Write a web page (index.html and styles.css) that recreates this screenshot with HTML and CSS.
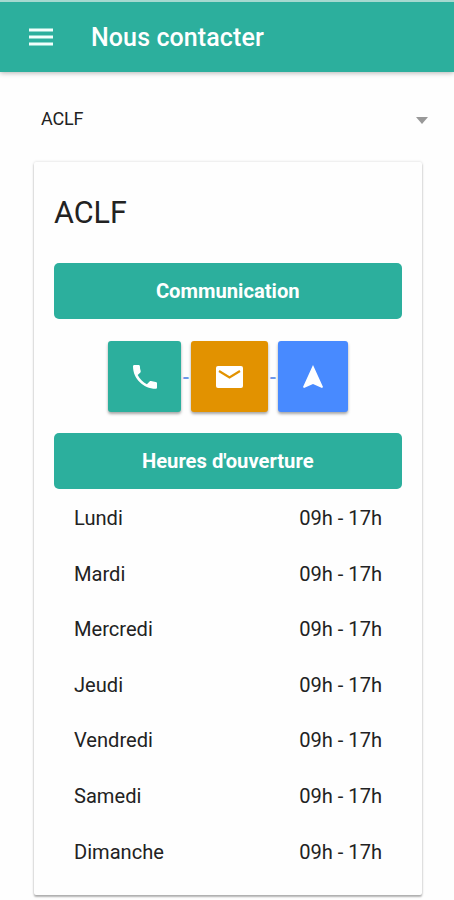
FILE: index.html
```html
<!DOCTYPE html>
<html lang="fr">
<head>
<meta charset="utf-8">
<title>Nous contacter</title>
<link rel="stylesheet" href="styles.css">
</head>
<body>
<header class="toolbar">
  <svg class="menu" viewBox="0 0 24 18" aria-hidden="true"><path d="M0 2h24M0 9h24M0 16h24"/></svg>
  <h1 class="toolbar-title">Nous contacter</h1>
</header>
<main>
  <div class="select"><span>ACLF</span><svg class="caret" viewBox="0 0 12 7" aria-hidden="true"><path d="M0 0h12L6 7z"/></svg></div>
  <section class="card">
    <h2 class="card-title">ACLF</h2>
    <div class="banner">Communication</div>
    <div class="actions">
      <a class="action call"><svg viewBox="0 0 24 24" aria-hidden="true"><path d="M1.4 0h4.2c.7 0 1.3.6 1.3 1.3 0 1.7.3 3.3.8 4.8.1.5 0 1-.3 1.3L4.7 10.1c1.9 3.9 5.2 7.1 9.2 9.1l2.7-2.8c.4-.4.9-.5 1.4-.3 1.500.5 3.1.8 4.7.8.7 0 1.3.6 1.3 1.3v4.3c0 .7-.6 1.300-1.300 1.300C10.2 23.8 0 13.6 0 1.3 0 .6.6 0 1.4 0z"/></svg></a>
      <span class="dash">-</span>
      <a class="action mail"><svg viewBox="0 0 27 22" aria-hidden="true"><rect width="27" height="22" rx="2"/><path class="flap" d="M3 5l10.500 6.500L24 5"/></svg></a>
      <span class="dash">-</span>
      <a class="action nav"><svg viewBox="0 0 20 23" aria-hidden="true"><path d="M10 0L20 22l-1 1-9-4-9 4-1-1z"/></svg></a>
    </div>
    <div class="banner">Heures d'ouverture</div>
    <ul class="hours">
      <li><span>Lundi</span><span>09h - 17h</span></li>
      <li><span>Mardi</span><span>09h - 17h</span></li>
      <li><span>Mercredi</span><span>09h - 17h</span></li>
      <li><span>Jeudi</span><span>09h - 17h</span></li>
      <li><span>Vendredi</span><span>09h - 17h</span></li>
      <li><span>Samedi</span><span>09h - 17h</span></li>
      <li><span>Dimanche</span><span>09h - 17h</span></li>
    </ul>
  </section>
</main>
</body>
</html>
```
FILE: styles.css
```css
* { box-sizing: border-box; }
body {
  margin: 0;
  height: 900px;
  overflow: hidden;
  background: #fefefe;
  color: #222;
  font-family: Roboto, sans-serif;
}
.toolbar {
  display: flex;
  align-items: center;
  height: 72px;
  padding-left: 29px;
  border-top: 2px solid #a5d9d0;
  background: #2caf9d;
  box-shadow: 0 1px 5px rgba(0, 0, 0, .3);
}
.menu {
  width: 24px;
  height: 18px;
  fill: none;
  stroke: #f2fffc;
  stroke-width: 3;
}
.toolbar-title {
  margin: 0 0 0 38px;
  color: #fff;
  font-size: 25px;
  font-weight: 500;
  letter-spacing: .1px;
}
.select {
  display: flex;
  align-items: center;
  justify-content: space-between;
  height: 90px;
  padding: 2px 26px 0 41px;
  font-size: 18px;
  letter-spacing: -.2px;
}
.caret {
  width: 12px;
  height: 7px;
  margin-top: 4px;
  fill: #999;
}
.card {
  width: 388px;
  height: 733px;
  margin-left: 34px;
  padding: 0 20px;
  border-radius: 2px;
  background: #fefefe;
  box-shadow: 0 2px 2px rgba(0, 0, 0, .28), 0 0 3px rgba(0, 0, 0, .16);
}
.card-title {
  height: 101px;
  margin: 0;
  line-height: 101px;
  font-size: 30.500px;
  font-weight: 400;
}
.banner {
  height: 56px;
  margin-left: -.5px;
  border-radius: 5px;
  background: #2caf9d;
  color: #fff;
  font-size: 20.200px;
  font-weight: 700;
  line-height: 56px;
  text-align: center;
}
.actions {
  display: flex;
  justify-content: center;
  height: 114px;
  padding-top: 22px;
}
.action {
  display: flex;
  align-items: center;
  justify-content: center;
  height: 71px;
  border-radius: 3px;
  box-shadow: 0 2px 3px rgba(0, 0, 0, .35);
}
.action svg { fill: #fff; }
.call { width: 73px; background: #2caf9d; }
.call svg { width: 24px; height: 24px; }
.mail { width: 77px; background: #e29200; }
.mail svg { width: 27px; height: 22px; }
.mail .flap { fill: none; stroke: #e29200; stroke-width: 2.200; }
.nav { width: 70px; background: #488aff; }
.nav svg { width: 20px; height: 23px; }
.dash {
  width: 10px;
  color: #6e98e8;
  font-size: 20px;
  font-weight: 500;
  line-height: 72px;
  text-align: center;
}
.hours {
  margin: 0;
  padding: 2px 20px 0;
  list-style: none;
  font-size: 20.100px;
}
.hours li {
  display: flex;
  justify-content: space-between;
  height: 55.600px;
  line-height: 55.600px;
}
```
